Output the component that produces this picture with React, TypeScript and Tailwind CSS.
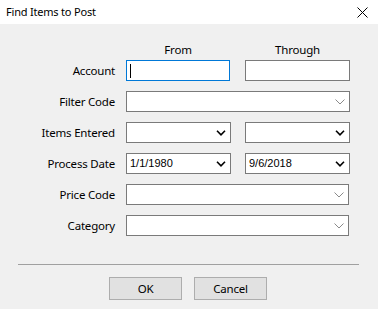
import React from "react";

const font = { fontFamily: '"Noto Sans", "Open Sans", sans-serif', letterSpacing: "-0.2px" };

function Chevron({ bold }: { bold?: boolean }) {
  return bold ? (
    <svg width="10" height="6" viewBox="0 0 10 6" className="shrink-0">
      <path d="M1 0.8 L5 4.8 L9 0.8" fill="none" stroke="#000" strokeWidth="1.6" />
    </svg>
  ) : (
    <svg width="10" height="6" viewBox="0 0 10 6" className="shrink-0">
      <path d="M0.5 0.5 L5 5 L9.5 0.5" fill="none" stroke="#8a8a8a" strokeWidth="1" />
    </svg>
  );
}

function Box({
  w,
  children,
  focus,
  chevron,
}: {
  w: string;
  children?: React.ReactNode;
  focus?: boolean;
  chevron?: "bold" | "light";
}) {
  return (
    <div
      className={`${w} h-[21px] bg-white border flex items-center ${
        focus ? "border-[#0078d7]" : "border-[#7a7a7a]"
      }`}
    >
      <div
        className="flex-1 pl-[3px] text-[11px] text-black"
        style={{ fontFamily: '"Liberation Sans", Arial, sans-serif', letterSpacing: "0px" }}
      >
        {children}
      </div>
      {chevron && (
        <div className="pr-[4px] flex items-center">
          <Chevron bold={chevron === "bold"} />
        </div>
      )}
    </div>
  );
}

function Row({ label, children }: { label: string; children: React.ReactNode }) {
  return (
    <div className="flex items-center h-[21px]">
      <div className="w-[115px] text-right text-[11.5px] text-black">{label}</div>
      <div className="ml-[11px] flex items-center">{children}</div>
    </div>
  );
}

export default function App() {
  return (
    <div className="w-[378px] h-[309px] bg-[#f0f0f0] flex flex-col" style={font}>
      <div className="h-[24px] bg-white flex items-center justify-between pl-[6px] pr-[10px]">
        <span className="text-[11px] text-black">Find Items to Post</span>
        <svg width="11" height="11" viewBox="0 0 11 11">
          <path d="M0.5 0.5 L10.5 10.5 M10.5 0.5 L0.5 10.5" stroke="#000" strokeWidth="1" />
        </svg>
      </div>
      <div className="flex pt-[17px] h-[36px] text-[11.5px] text-black">
        <div className="w-[126px]" />
        <div className="w-[104px] text-center">From</div>
        <div className="w-[15px]" />
        <div className="w-[105px] text-center">Through</div>
      </div>
      <div className="flex flex-col gap-[10px]">
        <Row label="Account">
          <Box w="w-[104px]" focus>
            <span className="inline-block w-px h-[14px] bg-black align-middle" />
          </Box>
          <div className="w-[15px]" />
          <Box w="w-[105px]" />
        </Row>
        <Row label="Filter Code">
          <Box w="w-[224px]" chevron="light" />
        </Row>
        <Row label="Items Entered">
          <Box w="w-[105px]" chevron="bold" />
          <div className="w-[14px]" />
          <Box w="w-[105px]" chevron="bold" />
        </Row>
        <Row label="Process Date">
          <Box w="w-[105px]" chevron="bold">1/1/1980</Box>
          <div className="w-[14px]" />
          <Box w="w-[105px]" chevron="bold">9/6/2018</Box>
        </Row>
        <Row label="Price Code">
          <Box w="w-[223px]" chevron="light" />
        </Row>
        <Row label="Category">
          <Box w="w-[223px]" chevron="light" />
        </Row>
      </div>
      <div className="mx-[18px] mt-[28px] h-px bg-[#a0a0a0] w-[341px]" />
      <div className="flex justify-center gap-[12px] mt-[12px] ml-[-2px]">
        <button className="w-[73px] h-[23px] bg-[#e1e1e1] border border-[#adadad] text-[11.5px] text-black">OK</button>
        <button className="w-[73px] h-[23px] bg-[#e1e1e1] border border-[#adadad] text-[11.5px] text-black">Cancel</button>
      </div>
    </div>
  );
}
